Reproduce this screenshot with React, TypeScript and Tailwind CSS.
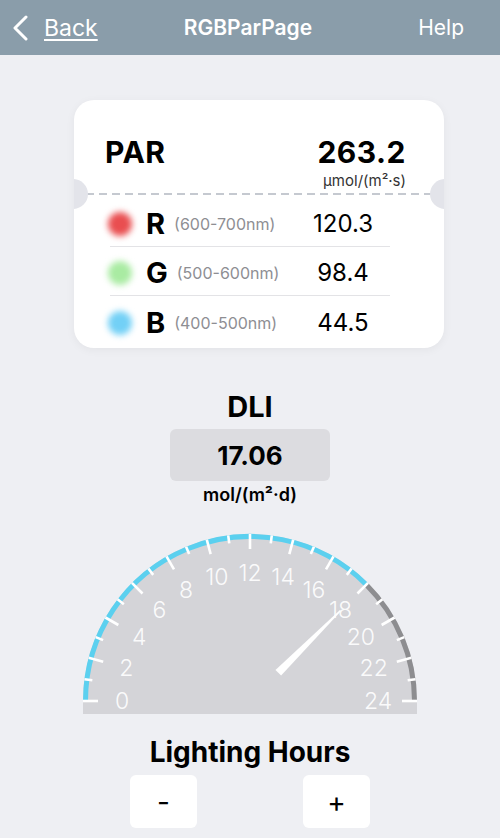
import React from "react";

const CX = 170;
const CY = 171;
const R = 167;

function pt(r: number, deg: number) {
  const a = (deg * Math.PI) / 180;
  return [CX + r * Math.cos(a), CY - r * Math.sin(a)];
}

function Gauge() {
  const hours = Array.from({ length: 25 }, (_, i) => i);
  const value = 18;
  const valDeg = 180 - 7.5 * value;
  const br = 164.5;
  const [bx0, by0] = pt(br, 180);
  const [bx1, by1] = pt(br, valDeg);
  const [gx1, gy1] = pt(br, 0);
  const a = (valDeg * Math.PI) / 180;
  const ux = Math.cos(a);
  const uy = -Math.sin(a);
  const px = -uy;
  const py = ux;
  const b0 = 40;
  const t0 = 128;
  const bw = 4;
  const tw = 0.8;
  const np = [
    [CX + ux * b0 + px * bw, CY + uy * b0 + py * bw],
    [CX + ux * t0 + px * tw, CY + uy * t0 + py * tw],
    [CX + ux * t0 - px * tw, CY + uy * t0 - py * tw],
    [CX + ux * b0 - px * bw, CY + uy * b0 - py * bw],
  ]
    .map((p) => p.map((v) => v.toFixed(2)).join(","))
    .join(" ");

  return (
    <svg width="340" height="185" viewBox="0 0 340 185">
      <path d={`M 3 171 A 167 167 0 0 1 337 171 L 337 184 L 3 184 Z`} fill="#d4d4d8" />
      <path
        d={`M ${bx0} ${by0} A ${br} ${br} 0 0 1 ${bx1} ${by1}`}
        fill="none"
        stroke="#5bd0ef"
        strokeWidth="5"
      />
      <path
        d={`M ${bx1} ${by1} A ${br} ${br} 0 0 1 ${gx1} ${gy1}`}
        fill="none"
        stroke="#8d8d90"
        strokeWidth="5"
      />
      {hours.map((h) => {
        const deg = 180 - 7.5 * h;
        const major = h % 2 === 0;
        const [x1, y1] = pt(R, deg);
        const [x2, y2] = pt(major ? 152 : 159, deg);
        return (
          <line key={h} x1={x1} y1={y1} x2={x2} y2={y2} stroke="#ffffff" strokeWidth="2.6" />
        );
      })}
      {hours
        .filter((h) => h % 2 === 0)
        .map((h) => {
          const [x, y] = pt(128, 180 - 7.5 * h);
          return (
            <text
              key={h}
              x={x}
              y={y}
              textAnchor="middle"
              dominantBaseline="central"
              fill="#ffffff"
              fillOpacity="0.92"
              fontSize="23"
              fontWeight="300"
              fontFamily="Inter, 'Open Sans', sans-serif"
            >
              {h}
            </text>
          );
        })}
      <polygon points={np} fill="#ffffff" />
    </svg>
  );
}

function Row({
  color,
  letter,
  range,
  value,
  divider,
}: {
  color: string;
  letter: string;
  range: string;
  value: string;
  divider: boolean;
}) {
  return (
    <div className={`flex items-center h-[49px] pt-[4px] ${divider ? "border-b border-[#e3e3e6]" : ""}`}>
      <div className="flex-1 flex items-center">
        <div className={`w-[24px] h-[24px] rounded-full ml-[-2px] blur-[3px] ${color}`} />
        <span className="ml-[14px] text-[29px] leading-[34px] font-bold text-black">{letter}</span>
        <span className="ml-[9px] text-[16px] text-[#8e8e93] leading-[20px]">{range}</span>
      </div>
      <span className="w-[80px] mr-[7px] text-center text-[24px] leading-[30px] text-black">{value}</span>
    </div>
  );
}

export default function App() {
  return (
    <div
      className="w-[500px] h-[838px] bg-[#eeeff3] overflow-hidden flex flex-col"
      style={{ fontFamily: "Inter, 'Open Sans', 'Liberation Sans', sans-serif" }}
    >
      {/* Header */}
      <div className="h-[55px] bg-[#8a9daa] flex items-center relative shrink-0">
        <div className="flex items-center ml-[12px]">
          <svg width="17" height="26" viewBox="0 0 17 26">
            <polyline points="14,2 3,13 14,24" fill="none" stroke="#ffffff" strokeWidth="3" strokeLinecap="round" strokeLinejoin="round" />
          </svg>
          <span className="ml-[15px] text-[23px] text-white underline underline-offset-[3px] decoration-[1.5px] leading-[28px]">
            Back
          </span>
        </div>
        <div className="flex-1 text-center text-[21px] font-semibold text-white ml-[-20px]">RGBParPage</div>
        <span className="mr-[36px] text-[21px] text-white">Help</span>
      </div>

      {/* Card */}
      <div className="relative ml-[74px] mt-[45px] w-[370px] h-[248px] bg-white rounded-[20px] shadow-[0_2px_10px_rgba(0,0,0,0.05)] overflow-hidden shrink-0">
        <div className="pl-[31px] pr-[38px] pt-[35px] h-[93px]">
          <div className="flex justify-between items-center">
            <span className="text-[30px] leading-[34px] font-bold text-black tracking-[0.5px]">PAR</span>
            <span className="text-[30px] leading-[34px] font-bold text-black tracking-[0.5px]">263.2</span>
          </div>
          <div className="text-right text-[15px] leading-[16px] text-[#333] mt-[4px]">µmol/(m²·s)</div>
        </div>
        <svg width="370" height="2" className="block">
          <line x1="12" y1="1" x2="358" y2="1" stroke="#c5c9d0" strokeWidth="2" strokeDasharray="8 5" />
        </svg>
        <div className="ml-[36px] w-[280px] mt-[3px]">
          <Row color="bg-[#e94e50]" letter="R" range="(600-700nm)" value="120.3" divider />
          <Row color="bg-[#a9eba2]" letter="G" range="(500-600nm)" value="98.4" divider />
          <Row color="bg-[#72d0f6]" letter="B" range="(400-500nm)" value="44.5" divider={false} />
        </div>
        <div className="absolute left-[-16px] top-[79px] w-[30px] h-[30px] rounded-full bg-[#e3e4ea]" />
        <div className="absolute right-[-16px] top-[79px] w-[30px] h-[30px] rounded-full bg-[#e3e4ea]" />
      </div>

      {/* DLI */}
      <div className="flex flex-col items-center mt-[42px] shrink-0">
        <div className="text-[29px] leading-[34px] font-bold text-black">DLI</div>
        <div className="mt-[5px] w-[160px] h-[52px] rounded-[6px] bg-[#dcdce0] flex items-center justify-center">
          <span className="text-[26px] font-bold text-black">17.06</span>
        </div>
        <div className="mt-[3px] text-[18px] leading-[22px] font-semibold text-black">mol/(m²·d)</div>
      </div>

      {/* Gauge */}
      <div className="flex justify-center mt-[24px] shrink-0">
        <Gauge />
      </div>

      {/* Lighting hours */}
      <div className="flex flex-col items-center mt-[21px] shrink-0">
        <div className="text-[28px] leading-[32px] font-bold text-black">Lighting Hours</div>
        <div className="flex gap-[106px] mt-[7px]">
          <button className="w-[67px] h-[53px] bg-white rounded-[6px] text-[28px] text-black flex items-center justify-center">-</button>
          <button className="w-[67px] h-[53px] bg-white rounded-[6px] text-[28px] text-black flex items-center justify-center">+</button>
        </div>
      </div>
    </div>
  );
}
